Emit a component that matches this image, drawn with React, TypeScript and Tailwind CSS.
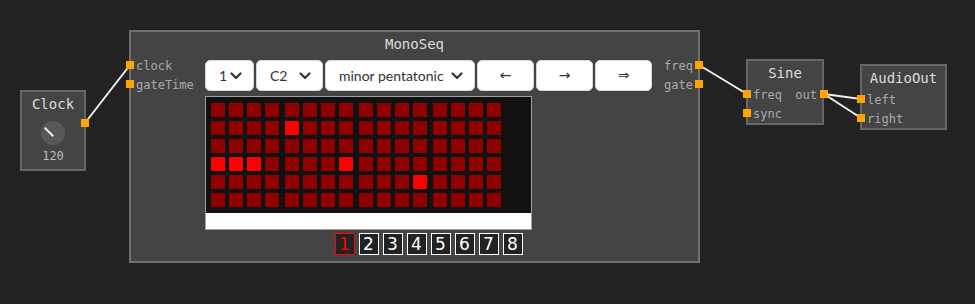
import React from "react";

const mono = "font-['DejaVu_Sans_Mono',monospace]";

const lit: Record<string, boolean> = {
    "1-4": true,
    "3-0": true,
    "3-1": true,
    "3-2": true,
    "3-7": true,
    "4-11": true,
};

function Port({ className }: { className: string }) {
    return <span className={`absolute w-[8px] h-[8px] bg-[#ffa500] ${className}`} />;
}

function Chevron() {
    return (
        <svg width="12" height="8" viewBox="0 0 12 8" className="shrink-0">
            <polyline points="1.5,1.5 6,6 10.5,1.5" fill="none" stroke="#333" strokeWidth="2.2" strokeLinecap="round" strokeLinejoin="round" />
        </svg>
    );
}

function Select({ label, width }: { label: string; width: string }) {
    return (
        <div className={`${width} h-[31px] flex items-center justify-between pl-[13px] pr-[11px] bg-white rounded-[5px] border border-[#d8d8d8] text-[14px] text-[#333] whitespace-nowrap font-['Lato',sans-serif]`}>
            <span>{label}</span>
            <Chevron />
        </div>
    );
}

function ArrowButton({ glyph }: { glyph: string }) {
    return (
        <div className="w-[57px] h-[31px] flex items-center justify-center bg-white rounded-[5px] border border-[#d8d8d8] text-[14px] text-[#333] font-['DejaVu_Sans',sans-serif]">
            {glyph}
        </div>
    );
}

function StepGrid() {
    const rows = [0, 1, 2, 3, 4, 5];
    const groups = [0, 1, 2, 3];
    return (
        <div className="w-[327px] h-[134px] border border-[#a0a0a0] flex flex-col">
            <div className="h-[116px] bg-[#111] pl-[5px] pt-[6px] flex flex-col gap-[4px]">
                {rows.map((r) => (
                    <div key={r} className="flex gap-[6px]">
                        {groups.map((g) => (
                            <div key={g} className="flex gap-[4px]">
                                {[0, 1, 2, 3].map((i) => {
                                    const c = g * 4 + i;
                                    return (
                                        <div
                                            key={c}
                                            className={`w-[14px] h-[14px] ${lit[`${r}-${c}`] ? "bg-[#ff0000]" : "bg-[#900000]"}`}
                                        />
                                    );
                                })}
                            </div>
                        ))}
                    </div>
                ))}
            </div>
            <div className="flex-1 bg-white" />
        </div>
    );
}

function Pager() {
    return (
        <div className="flex justify-center gap-[4px] mt-[3px]">
            {[1, 2, 3, 4, 5, 6, 7, 8].map((n) => (
                <div
                    key={n}
                    className={`w-[20px] h-[22px] flex items-center justify-center bg-[#222] border text-[17px] leading-none font-['DejaVu_Sans',sans-serif] ${n === 1 ? "border-[#ff0000] text-[#ff0000]" : "border-white text-white"}`}
                >
                    {n}
                </div>
            ))}
        </div>
    );
}

export default function App() {
    return (
        <div className={`relative w-[975px] h-[304px] bg-[#222] overflow-hidden ${mono}`}>
            <svg className="absolute inset-0" width="975" height="304">
                <g stroke="#eee" strokeWidth="2" fill="none">
                    <line x1="85" y1="123" x2="130" y2="65" />
                    <line x1="699" y1="65" x2="747" y2="94" />
                    <line x1="824" y1="94" x2="861" y2="99" />
                    <line x1="824" y1="94" x2="861" y2="118" />
                </g>
            </svg>

            {/* Clock */}
            <div className="absolute left-[20px] top-[90px] w-[66px] h-[81px] bg-[#444] border-2 border-[#666] flex flex-col items-center">
                <div className="h-[24px] leading-[24px] text-[14px] text-[#ddd]">Clock</div>
                <div className="relative mt-[5px] w-[24px] h-[24px] rounded-full bg-[#585858]">
                    <span className="absolute left-[2px] top-[10px] w-[12px] h-[2px] bg-[#eee] rotate-45 origin-center" />
                </div>
                <div className="mt-[3px] h-[16px] leading-[16px] text-[12px] text-[#bbb]">120</div>
                <Port className="right-[-5px] top-[27px]" />
            </div>

            {/* MonoSeq */}
            <div className="absolute left-[129px] top-[30px] w-[571px] h-[233px] bg-[#444] border-2 border-[#707070] flex flex-col">
                <div className="h-[24px] leading-[24px] text-center text-[14px] text-[#ddd]">MonoSeq</div>
                <div className="flex">
                    <div className="w-[74px] flex flex-col text-[12px] text-[#aaa]">
                        <div className="relative h-[19px] flex items-center pl-[5px]">
                            <Port className="left-[-5px] top-[5px]" />
                            clock
                        </div>
                        <div className="relative h-[19px] flex items-center pl-[5px]">
                            <Port className="left-[-5px] top-[5px]" />
                            gateTime
                        </div>
                    </div>
                    <div className="w-[447px] flex flex-col pt-[4px]">
                        <div className="flex gap-[2px]">
                            <Select label="1" width="w-[49px]" />
                            <Select label="C2" width="w-[67px]" />
                            <Select label="minor pentatonic" width="w-[150px]" />
                            <ArrowButton glyph="←" />
                            <ArrowButton glyph="→" />
                            <ArrowButton glyph="⇒" />
                        </div>
                        <div className="mt-[5px]">
                            <StepGrid />
                        </div>
                        <Pager />
                    </div>
                    <div className="flex-1 flex flex-col text-[12px] text-[#aaa]">
                        <div className="relative h-[19px] flex items-center justify-end pr-[5px]">
                            freq
                            <Port className="right-[-5px] top-[5px]" />
                        </div>
                        <div className="relative h-[19px] flex items-center justify-end pr-[5px]">
                            gate
                            <Port className="right-[-5px] top-[5px]" />
                        </div>
                    </div>
                </div>
            </div>

            {/* Sine */}
            <div className="absolute left-[746px] top-[59px] w-[78px] h-[66px] bg-[#444] border-2 border-[#666] flex flex-col">
                <div className="h-[24px] leading-[24px] text-center text-[14px] text-[#ddd]">Sine</div>
                <div className="relative h-[19px] flex items-center justify-between pl-[5px] pr-[5px] text-[12px] text-[#aaa]">
                    <Port className="left-[-5px] top-[5px]" />
                    <span>freq</span>
                    <span>out</span>
                    <Port className="right-[-6px] top-[5px]" />
                </div>
                <div className="relative h-[19px] flex items-center pl-[5px] text-[12px] text-[#aaa]">
                    <Port className="left-[-5px] top-[5px]" />
                    sync
                </div>
            </div>

            {/* AudioOut */}
            <div className="absolute left-[860px] top-[64px] w-[87px] h-[66px] bg-[#444] border-2 border-[#666] flex flex-col">
                <div className="h-[24px] leading-[24px] text-center text-[14px] text-[#ddd]">AudioOut</div>
                <div className="relative h-[19px] flex items-center pl-[5px] text-[12px] text-[#aaa]">
                    <Port className="left-[-5px] top-[5px]" />
                    left
                </div>
                <div className="relative h-[19px] flex items-center pl-[5px] text-[12px] text-[#aaa]">
                    <Port className="left-[-5px] top-[5px]" />
                    right
                </div>
            </div>
        </div>
    );
}
